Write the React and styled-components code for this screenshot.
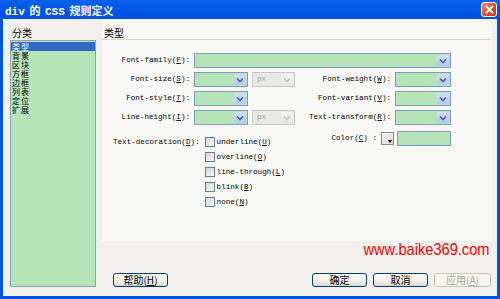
import styled, { createGlobalStyle } from "styled-components";

const GlobalStyle = createGlobalStyle`
  html, body { margin: 0; padding: 0; background: #ffffff; }
  #root { width: 500px; height: 299px; }
`;

const mono = `"Liberation Mono", "Noto Sans CJK SC", monospace`;
const cjk = `"Noto Sans CJK SC", "Liberation Sans", sans-serif`;

const Window = styled.div`
  width: 500px;
  height: 299px;
  box-sizing: border-box;
  display: flex;
  flex-direction: column;
  background: #0053e1;
  padding: 0 3px 3px 3px;
`;

const TitleBar = styled.div`
  height: 19px;
  margin: 0 -3px;
  display: flex;
  align-items: center;
  padding: 0 3px 0 5px;
  background: linear-gradient(#0a62ea, #0055e6 60%, #0150dc);
`;

const Title = styled.span`
  font-family: ${mono};
  font-weight: bold;
  font-size: 11px;
  word-spacing: -2px;
  color: #ffffff;
  white-space: nowrap;
`;

const CloseButton = styled.div`
  margin-left: auto;
  width: 16px;
  height: 15px;
  box-sizing: border-box;
  border: 1px solid #f4f4f4;
  border-radius: 3px;
  background: linear-gradient(135deg, #e98a6c, #d9502a 55%, #c23a14);
  display: flex;
  align-items: center;
  justify-content: center;
`;

const Body = styled.div`
  flex: 1;
  display: flex;
  gap: 6px;
  padding: 7px 5px 9px 7px;
  background: #f1f0ec;
`;

const LeftCol = styled.div`
  width: 86px;
  display: flex;
  flex-direction: column;
`;

const SectionLabel = styled.div`
  font-family: ${cjk};
  font-size: 10px;
  line-height: 13px;
  padding-left: 2px;
  color: #000;
`;

const ListBox = styled.div`
  flex: 1;
  margin-top: 1px;
  border: 1px solid #8ea5b8;
  background: #b6e4b9;
  padding-top: 1px;
`;

const ListItem = styled.div`
  font-family: ${cjk};
  font-size: 8px;
  line-height: 9px;
  height: 9px;
  padding-left: 1px;
  letter-spacing: 1px;
  color: ${(p) => (p.$selected ? "#ffffff" : "#000000")};
  background: ${(p) => (p.$selected ? "#316ac5" : "transparent")};
  white-space: nowrap;
`;

const RightCol = styled.div`
  flex: 1;
  display: flex;
  flex-direction: column;
`;

const Panel = styled.div`
  flex: 1;
  background: #f8f8f6;
  margin-top: -7px;
  padding-top: 7px;
`;

const Header = styled(SectionLabel)`
  border-bottom: 1px solid #d6d3c7;
  margin-right: 2px;
`;

const FormGrid = styled.div`
  margin-top: 13px;
  display: grid;
  grid-template-columns: 88px 54px 43px 92px 56px;
  grid-auto-rows: 15px;
  column-gap: 4px;
  row-gap: 4px;
`;

const Label = styled.div`
  font-family: ${mono};
  font-size: 7.6px;
  line-height: 15px;
  text-align: right;
  white-space: nowrap;
  color: #000;
`;

const Key = styled.span`
  text-decoration: underline;
`;

const Select = styled.div`
  grid-column: ${(p) => p.$span || "auto"};
  box-sizing: border-box;
  height: 15px;
  display: flex;
  justify-content: flex-end;
  padding: 1px;
  border: 1px solid ${(p) => (p.$disabled ? "#c9c9c4" : "#7f9db9")};
  background: ${(p) => (p.$disabled ? "#e8e8e6" : "#b6e4b9")};
  font-family: ${mono};
  font-size: 7.6px;
  line-height: 11px;
  color: #a5a5a0;
`;

const SelectText = styled.span`
  flex: 1;
  padding-left: 3px;
`;

const Arrow = styled.div`
  width: 12px;
  height: 11px;
  border-radius: 1px;
  background: ${(p) =>
    p.$disabled ? "linear-gradient(#f4f4f2, #e6e6e2)" : "linear-gradient(#d0defd, #b4c8f6)"};
  display: flex;
  align-items: center;
  justify-content: center;
`;

const Lower = styled.div`
  display: flex;
  margin-top: 6px;
`;

const Decoration = styled.div`
  display: flex;
  padding-left: 11px;
  margin-top: 6px;
`;

const DecoLabel = styled(Label)`
  line-height: 10px;
`;

const CheckList = styled.div`
  display: flex;
  flex-direction: column;
  gap: 5px;
  margin-left: 5px;
`;

const CheckRow = styled.label`
  display: flex;
  align-items: center;
  gap: 2px;
  height: 10px;
  font-family: ${mono};
  font-size: 7.6px;
  color: #000;
  white-space: nowrap;
`;

const CheckBox = styled.span`
  width: 10px;
  height: 10px;
  box-sizing: border-box;
  border: 1px solid #5a7dae;
  background: linear-gradient(135deg, #d9d9d2, #f6f6f2);
`;

const ColorBlock = styled.div`
  margin-left: auto;
  margin-right: 41px;
  display: flex;
  align-items: center;
  height: 15px;
`;

const Swatch = styled.div`
  position: relative;
  width: 13px;
  height: 13px;
  box-sizing: border-box;
  margin: 0 3px 0 4px;
  border: 1px solid #8a8a86;
  background: linear-gradient(135deg, #f6f6f4, #d8d8d2);
  &::after {
    content: "";
    position: absolute;
    right: 1px;
    bottom: 1px;
    border-left: 2px solid transparent;
    border-right: 2px solid transparent;
    border-top: 3px solid #000;
  }
`;

const ColorInput = styled.div`
  width: 54px;
  height: 15px;
  box-sizing: border-box;
  border: 1px solid #7f9db9;
  background: #b6e4b9;
`;

const UrlRow = styled.div`
  height: 16px;
  margin-bottom: 16px;
  padding-right: 3px;
  text-align: right;
`;

const Url = styled.span`
  display: inline-block;
  font-family: "Liberation Sans", Arial, sans-serif;
  font-size: 17px;
  line-height: 16px;
  color: #ff0000;
  transform: scaleX(0.86);
  transform-origin: right center;
`;

const ButtonRow = styled.div`
  display: flex;
  gap: 6px;
  padding: 0 1px 0 11px;
`;

const Button = styled.div`
  width: ${(p) => p.$w || 55}px;
  height: 14px;
  box-sizing: border-box;
  margin-left: ${(p) => (p.$push ? "auto" : "0")};
  border: 1px solid ${(p) => (p.$disabled ? "#c9c7ba" : "#003c74")};
  border-radius: 3px;
  background: ${(p) =>
    p.$disabled ? "#f5f4ee" : "linear-gradient(#ffffff, #f2f1ec 60%, #d8d5cb)"};
  font-family: ${cjk};
  font-size: 10px;
  line-height: 12px;
  text-align: center;
  color: ${(p) => (p.$disabled ? "#aca899" : "#000")};
`;

function Chevron({ disabled }) {
  return (
    <svg width="8" height="6" viewBox="0 0 8 6">
      <path d="M1 1.5 L4 4.5 L7 1.5" fill="none" stroke={disabled ? "#c4c4c0" : "#4d6185"} strokeWidth="1.6" />
    </svg>
  );
}

function Combo({ span, disabled, text }) {
  return (
    <Select $span={span} $disabled={disabled}>
      {text && <SelectText>{text}</SelectText>}
      <Arrow $disabled={disabled}>
        <Chevron disabled={disabled} />
      </Arrow>
    </Select>
  );
}

function Lbl({ text, k }) {
  return (
    <Label>
      {text}(<Key>{k}</Key>):
    </Label>
  );
}

const categories = ["类型", "背景", "区块", "方框", "边框", "列表", "定位", "扩展"];
const decorations = [
  ["underline", "U"],
  ["overline", "O"],
  ["line-through", "L"],
  ["blink", "B"],
  ["none", "N"],
];

export default function App() {
  return (
    <>
      <GlobalStyle />
      <Window>
        <TitleBar>
          <Title>div 的 CSS 规则定义</Title>
          <CloseButton>
            <svg width="9" height="9" viewBox="0 0 9 9">
              <path d="M1 1 L8 8 M8 1 L1 8" stroke="#ffffff" strokeWidth="1.8" />
            </svg>
          </CloseButton>
        </TitleBar>
        <Body>
          <LeftCol>
            <SectionLabel>分类</SectionLabel>
            <ListBox>
              {categories.map((c, i) => (
                <ListItem key={c} $selected={i === 0}>
                  {c}
                </ListItem>
              ))}
            </ListBox>
          </LeftCol>
          <RightCol>
            <Panel>
              <Header>类型</Header>
              <FormGrid>
                <Lbl text="Font-family" k="F" />
                <Combo span="2 / 6" />

                <Lbl text="Font-size" k="S" />
                <Combo />
                <Combo disabled text="px" />
                <Lbl text="Font-weight" k="W" />
                <Combo />

                <Lbl text="Font-style" k="T" />
                <Combo />
                <span />
                <Lbl text="Font-variant" k="V" />
                <Combo />

                <Lbl text="Line-height" k="I" />
                <Combo />
                <Combo disabled text="px" />
                <Lbl text="Text-transform" k="R" />
                <Combo />
              </FormGrid>
              <Lower>
                <Decoration>
                  <DecoLabel>
                    Text-decoration(<Key>D</Key>):
                  </DecoLabel>
                  <CheckList>
                    {decorations.map(([name, k]) => (
                      <CheckRow key={name}>
                        <CheckBox />
                        <span>
                          {name}(<Key>{k}</Key>)
                        </span>
                      </CheckRow>
                    ))}
                  </CheckList>
                </Decoration>
                <ColorBlock>
                  <Label>
                    Color(<Key>C</Key>) :
                  </Label>
                  <Swatch />
                  <ColorInput />
                </ColorBlock>
              </Lower>
            </Panel>
            <UrlRow>
              <Url>www.baike369.com</Url>
            </UrlRow>
            <ButtonRow>
              <Button>
                帮助(<Key>H</Key>)
              </Button>
              <Button $push>确定</Button>
              <Button>取消</Button>
              <Button $w={57} $disabled>
                应用(<Key>A</Key>)
              </Button>
            </ButtonRow>
          </RightCol>
        </Body>
      </Window>
    </>
  );
}
